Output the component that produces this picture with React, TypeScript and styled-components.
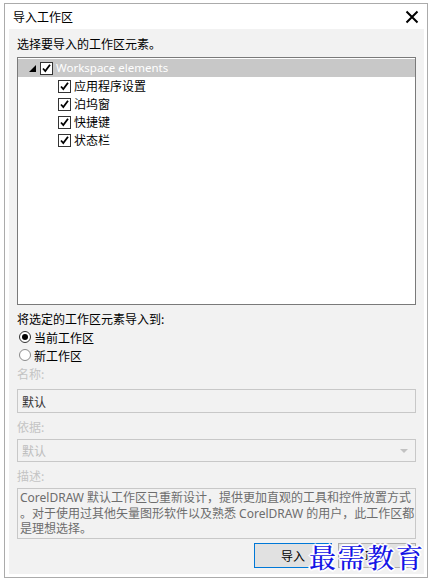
import styled, { createGlobalStyle } from 'styled-components'

const GlobalStyle = createGlobalStyle`
    body {
        margin: 0;
        background: #ffffff;
        font-family: "Segoe UI", "Noto Sans", "Noto Sans CJK SC", sans-serif;
        font-size: 12px;
        color: #000000;
    }
`;

const Frame = styled.div`
    position: relative;
    box-sizing: border-box;
    width: 424px;
    height: 575px;
    margin: 3px 0 0 4px;
    border: 1px solid #ababab;
    background: #ffffff;
    display: flex;
    flex-direction: column;
`;

const TitleBar = styled.div`
    height: 25px;
    display: flex;
    align-items: center;
    justify-content: space-between;
    padding: 0 8px 0 8px;
`;

const Title = styled.span`
    font-family: "Noto Sans CJK SC", sans-serif;
    font-size: 12px;
    line-height: 16px;
`;

const Close = styled.span`
    display: flex;
    width: 14px;
    height: 14px;
    margin-top: 1px;
`;

const Panel = styled.div`
    flex: 1;
    margin: 0 3px 3px 4px;
    background: #f2f2f2;
    padding: 6px 8px 0 8px;
    display: flex;
    flex-direction: column;
`;

const Label = styled.div<{ $muted?: boolean; $top?: number }>`
    font-family: "Noto Sans CJK SC", sans-serif;
    font-size: 12px;
    line-height: 18px;
    height: 18px;
    margin-top: ${p => p.$top ?? 0}px;
    color: ${p => (p.$muted ? '#c4c4c4' : '#000000')};
`;

const Tree = styled.div`
    box-sizing: border-box;
    margin-top: 4px;
    height: 248px;
    background: #ffffff;
    border: 1px solid #7a7a7a;
    padding-top: 1px;
`;

const TreeRow = styled.div<{ $level: number; $selected?: boolean }>`
    display: flex;
    align-items: center;
    height: 18px;
    padding-left: ${p => (p.$level === 0 ? 10 : 40)}px;
    background: ${p => (p.$selected ? '#c8c8c8' : 'transparent')};
    color: ${p => (p.$selected ? '#ffffff' : '#000000')};
    font-family: "Noto Sans", "Noto Sans CJK SC", sans-serif;
    font-size: 12px;
`;

const Expander = styled.span`
    display: flex;
    width: 12px;
    height: 12px;
`;

const Box = styled.span`
    box-sizing: border-box;
    display: flex;
    align-items: center;
    justify-content: center;
    width: 13px;
    height: 13px;
    border: 1px solid #333333;
    background: #ffffff;
    margin-right: 3px;
`;

const RowText = styled.span`
    font-family: "Noto Sans CJK SC", sans-serif;
    line-height: 18px;
    white-space: nowrap;
`;

const RootText = styled.span`
    font-family: "Noto Sans", sans-serif;
    font-size: 11.5px;
    line-height: 18px;
    white-space: nowrap;
`;

const RadioRow = styled.div<{ $top?: number }>`
    display: flex;
    align-items: center;
    height: 18px;
    margin-top: ${p => p.$top ?? 0}px;
    padding-left: 2px;
    font-family: "Noto Sans CJK SC", sans-serif;
    font-size: 12px;
`;

const Radio = styled.span<{ $checked?: boolean }>`
    box-sizing: border-box;
    display: flex;
    align-items: center;
    justify-content: center;
    width: 12px;
    height: 12px;
    border-radius: 50%;
    border: 1px solid ${p => (p.$checked ? '#333333' : '#8a8a8a')};
    background: #ffffff;
    margin-right: 3px;
    &::after {
        content: '';
        display: ${p => (p.$checked ? 'block' : 'none')};
        width: 6px;
        height: 6px;
        border-radius: 50%;
        background: #000000;
    }
`;

const Field = styled.div<{ $muted?: boolean; $top?: number; $h?: number }>`
    box-sizing: border-box;
    display: flex;
    align-items: center;
    height: ${p => p.$h ?? 24}px;
    margin-top: ${p => p.$top ?? 0}px;
    padding: 0 4px;
    border: 1px solid #c8c8c8;
    background: #f2f2f2;
    color: ${p => (p.$muted ? '#bdbdbd' : '#333333')};
    font-family: "Noto Sans CJK SC", sans-serif;
    font-size: 12px;
`;

const Arrow = styled.span`
    margin-left: auto;
    margin-right: 3px;
    width: 0;
    height: 0;
    border-left: 4px solid transparent;
    border-right: 4px solid transparent;
    border-top: 4px solid #c2c2c2;
`;

const Description = styled.div`
    box-sizing: border-box;
    height: 51px;
    margin-top: 3px;
    padding: 1px 2px 0 2px;
    border: 1px solid #c8c8c8;
    color: #6d6d6d;
    font-family: "Noto Sans", "Noto Sans CJK SC", sans-serif;
    font-size: 12px;
    line-height: 15.5px;
    white-space: nowrap;
    overflow: hidden;
`;

const Buttons = styled.div`
    display: flex;
    justify-content: flex-end;
    gap: 6px;
    margin-top: 4px;
`;

const Button = styled.button<{ $primary?: boolean }>`
    box-sizing: border-box;
    width: 78px;
    height: 25px;
    padding: 0;
    border: 1px solid ${p => (p.$primary ? '#0078d7' : '#adadad')};
    background: #e1e1e1;
    font-family: "Noto Sans CJK SC", sans-serif;
    font-size: 12px;
    color: #000000;
`;

const Watermark = styled.div`
    position: absolute;
    right: 2px;
    bottom: 2px;
    font-family: "Noto Serif CJK SC", "Noto Sans CJK SC", serif;
    font-size: 27px;
    font-weight: 500;
    line-height: 36px;
    letter-spacing: 2px;
    color: #1414e6;
    text-shadow: 1px 1px 0 #fff, -1px -1px 0 #fff, 1px -1px 0 #fff, -1px 1px 0 #fff, 2px 0 0 #fff, -2px 0 0 #fff, 0 2px 0 #fff, 0 -2px 0 #fff;
`;

const Check = () => (
    <svg width="11" height="11" viewBox="0 0 11 11">
        <path d="M2 5.5 L4.3 8 L9 1.8" fill="none" stroke="#000" strokeWidth="1.8" />
    </svg>
);

const items = ['应用程序设置', '泊坞窗', '快捷键', '状态栏'];

function App() {
    return (
        <>
            <GlobalStyle />
            <Frame>
                <TitleBar>
                    <Title>导入工作区</Title>
                    <Close>
                        <svg width="14" height="14" viewBox="0 0 14 14">
                            <path d="M1.5 1.5 L12.5 12.5 M12.5 1.5 L1.5 12.5" stroke="#000" strokeWidth="2" />
                        </svg>
                    </Close>
                </TitleBar>
                <Panel>
                    <Label>选择要导入的工作区元素。</Label>
                    <Tree>
                        <TreeRow $level={0} $selected>
                            <Expander>
                                <svg width="12" height="12" viewBox="0 0 12 12">
                                    <path d="M1 10 L8 10 L8 3 Z" fill="#000" />
                                </svg>
                            </Expander>
                            <Box><Check /></Box>
                            <RootText>Workspace elements</RootText>
                        </TreeRow>
                        {items.map(item => (
                            <TreeRow $level={1} key={item}>
                                <Box><Check /></Box>
                                <RowText>{item}</RowText>
                            </TreeRow>
                        ))}
                    </Tree>
                    <Label $top={5}>将选定的工作区元素导入到:</Label>
                    <RadioRow>
                        <Radio $checked />
                        当前工作区
                    </RadioRow>
                    <RadioRow>
                        <Radio />
                        新工作区
                    </RadioRow>
                    <Label $muted $top={1}>名称:</Label>
                    <Field $top={6}>默认</Field>
                    <Label $muted $top={5}>依据:</Label>
                    <Field $muted $top={3} $h={23}>
                        默认
                        <Arrow />
                    </Field>
                    <Label $muted $top={5}>描述:</Label>
                    <Description>
                        CorelDRAW 默认工作区已重新设计，提供更加直观的工具和控件放置方式<br />
                        。对于使用过其他矢量图形软件以及熟悉 CorelDRAW 的用户，此工作区都<br />
                        是理想选择。
                    </Description>
                    <Buttons>
                        <Button $primary>导入</Button>
                        <Button>取消</Button>
                    </Buttons>
                </Panel>
                <Watermark>最需教育</Watermark>
            </Frame>
        </>
    )
}

export default App
